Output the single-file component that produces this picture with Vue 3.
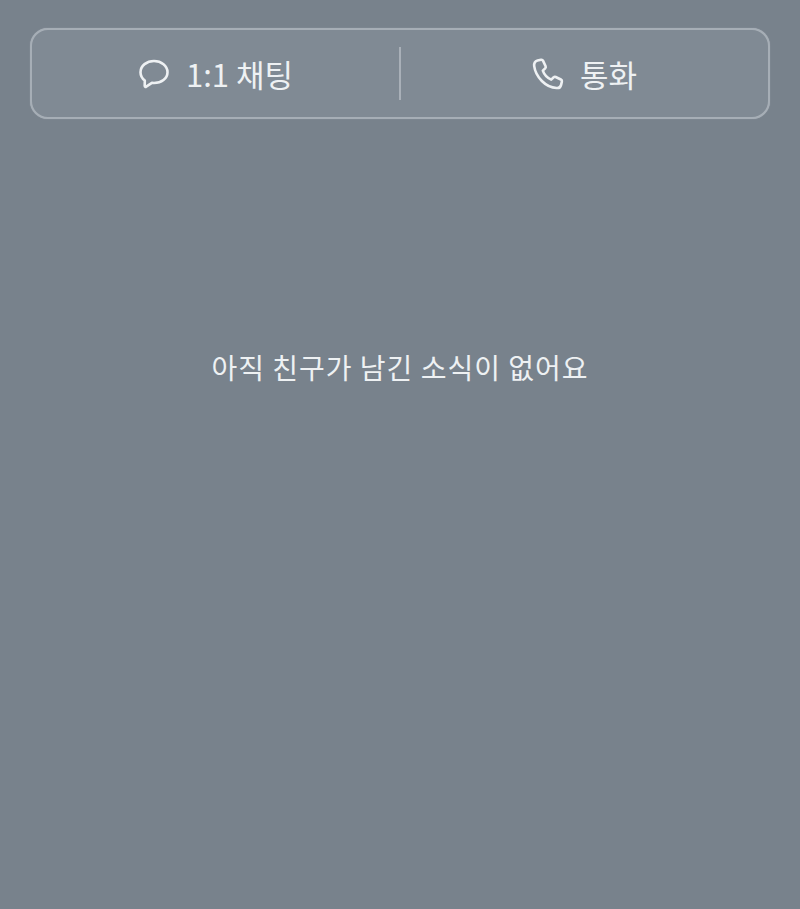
<template>
  <div class="screen">
    <div class="action-bar">
      <div class="action">
        <svg class="icon" viewBox="0 0 32 32" fill="none">
          <path d="M16 3C8.800 3 2.500 7.600 2.500 14.200c0 3.500 1.700 6.300 4.300 8.300l-.1 5.300c0 1 .8 1.300 1.500.8l5.700-3.700c.7.100 1.400.1 2.100.1 7.300 0 13.500-4.400 13.500-10.800S23.300 3 16 3z" stroke="#eef1f3" stroke-width="2.600" stroke-linejoin="round" />
        </svg>
        <span class="label">1:1 채팅</span>
      </div>
      <div class="divider"></div>
      <div class="action">
        <svg class="icon" viewBox="0 0 32 32" fill="none">
          <path d="M5.500 2.500 9 1.800c.9-.2 1.700.3 2.100 1.100l2.500 5.400c.3.700.1 1.500-.4 2l-2.400 2.300c1.300 3.700 4.600 7.300 8.400 9l2.500-2.300c.5-.5 1.300-.6 2-.3l5.200 2.500c.8.4 1.200 1.200 1 2l-.8 3.400c-.5 2.200-2.400 3.400-4.600 3.100C13.800 29.600 3.600 19 2.200 8.200 1.900 5.500 3.200 3.100 5.500 2.500z" stroke="#eef1f3" stroke-width="2.600" stroke-linejoin="round" />
        </svg>
        <span class="label">통화</span>
      </div>
    </div>
    <p class="empty-text">아직 친구가 남긴 소식이 없어요</p>
  </div>
</template>

<script setup>
</script>

<style>
html,
body {
  margin: 0;
  background: #78828c;
}
</style>

<style scoped>
.screen {
  height: 909px;
  box-sizing: border-box;
  padding: 28px 30px 0;
  background: #78828c;
  font-family: "Noto Sans CJK KR", "Noto Sans", sans-serif;
  overflow: hidden;
}

.action-bar {
  display: flex;
  align-items: center;
  height: 91px;
  box-sizing: border-box;
  background: #808a94;
  border: 2px solid #a6aeb6;
  border-radius: 18px;
  box-shadow: 0 0 1px #a6aeb6;
}

.action {
  flex: 1;
  display: flex;
  align-items: center;
  justify-content: center;
  gap: 16px;
  color: #eef1f3;
}

.icon {
  width: 32px;
  height: 32px;
}

.label {
  font-size: 31px;
  line-height: 40px;
}

.divider {
  width: 2px;
  height: 53px;
  background: #a9b0b8;
}

.empty-text {
  margin: 228px 0 0;
  text-align: center;
  font-size: 28px;
  line-height: 40px;
  letter-spacing: 1px;
  color: #eef1f3;
}
</style>
